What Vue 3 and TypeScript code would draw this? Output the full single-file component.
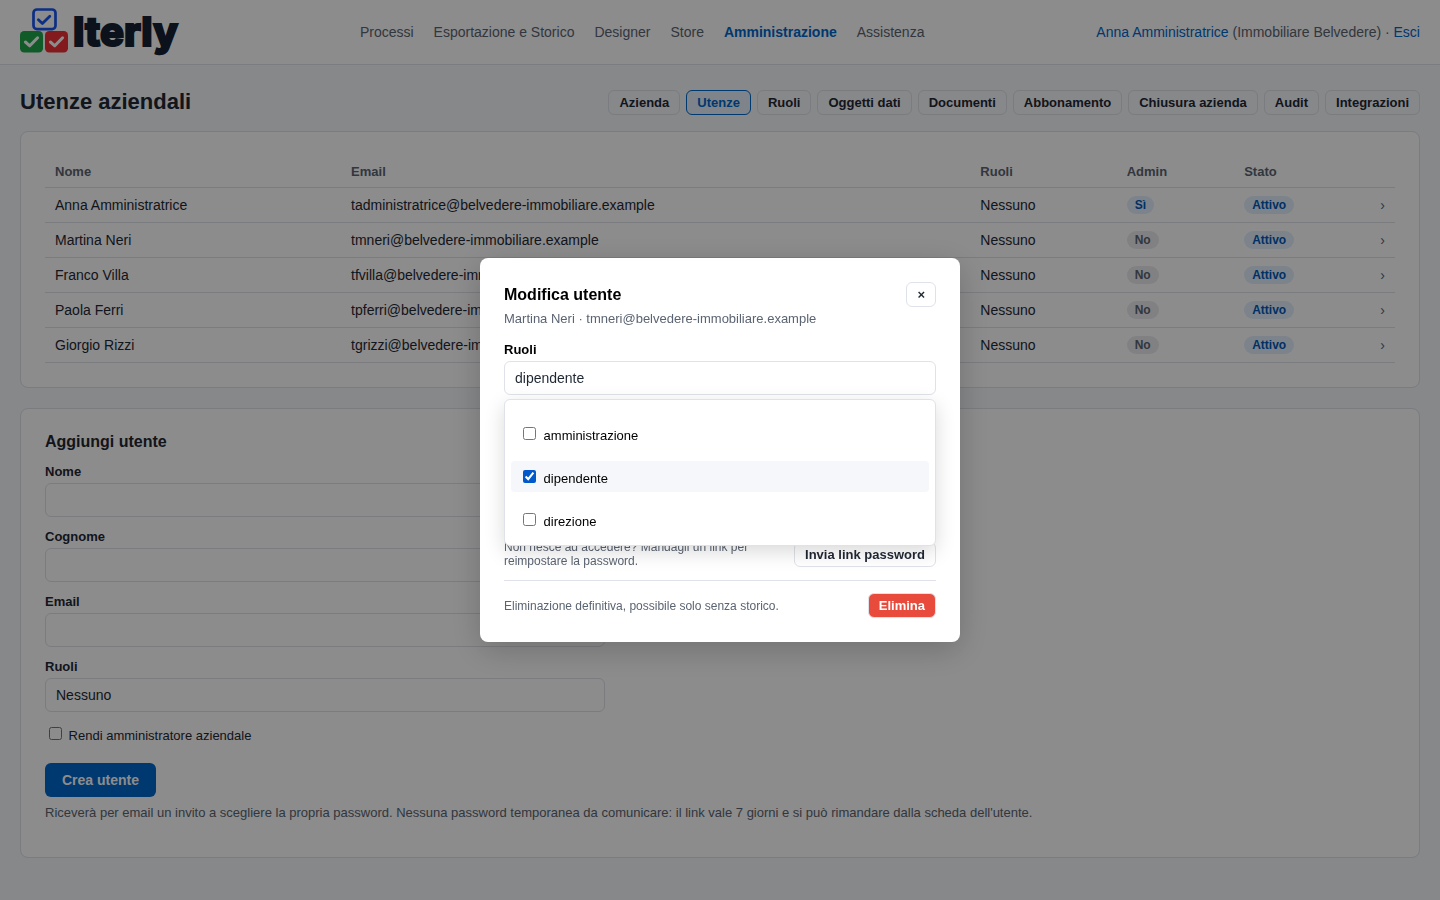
<script setup lang="ts">
import { ref } from 'vue'

interface User {
  name: string
  email: string
  admin: boolean
}

const navItems: string[] = ['Processi', 'Esportazione e Storico', 'Designer', 'Store', 'Amministrazione', 'Assistenza']
const tabs: string[] = ['Azienda', 'Utenze', 'Ruoli', 'Oggetti dati', 'Documenti', 'Abbonamento', 'Chiusura azienda', 'Audit', 'Integrazioni']
const users: User[] = [
  { name: 'Anna Amministratrice', email: 'tadministratrice@belvedere-immobiliare.example', admin: true },
  { name: 'Martina Neri', email: 'tmneri@belvedere-immobiliare.example', admin: false },
  { name: 'Franco Villa', email: 'tfvilla@belvedere-immobiliare.example', admin: false },
  { name: 'Paola Ferri', email: 'tpferri@belvedere-immobiliare.example', admin: false },
  { name: 'Giorgio Rizzi', email: 'tgrizzi@belvedere-immobiliare.example', admin: false },
]
const roles: string[] = ['amministrazione', 'dipendente', 'direzione']
const selected = ref<string[]>(['dipendente'])
const makeAdmin = ref(false)
</script>

<template>
  <div class="page">
    <header class="topbar">
      <a class="logo" href="#" aria-label="Iterly">
        <svg width="160" height="48" viewBox="0 0 160 48" aria-hidden="true">
          <rect x="13.5" y="1.5" width="22" height="19.6" rx="3.4" fill="none" stroke="#1656f0" stroke-width="2.7" />
          <path d="M18.4 11.8l4 3.8 7.4-7.4" fill="none" stroke="#1656f0" stroke-width="2.8" stroke-linecap="round" stroke-linejoin="round" />
          <rect x="0" y="23" width="23" height="21.6" rx="4.2" fill="#1fa64a" />
          <path d="M5.4 34l4.4 3.8 7.8-8" fill="none" stroke="#fff" stroke-width="3" stroke-linecap="round" stroke-linejoin="round" />
          <rect x="25" y="23" width="23" height="21.6" rx="4.2" fill="#ee3035" />
          <path d="M30.4 34l4.4 3.8 7.8-8" fill="none" stroke="#fff" stroke-width="3" stroke-linecap="round" stroke-linejoin="round" />
          <text class="wordmark" x="53" y="38">Iterly</text>
        </svg>
      </a>
      <nav class="nav">
        <a v-for="item in navItems" :key="item" href="#" :class="{ active: item === 'Amministrazione' }">{{ item }}</a>
      </nav>
      <div class="account"><a href="#">Anna Amministratrice</a> (Immobiliare Belvedere) · <a href="#">Esci</a></div>
    </header>

    <main class="main">
      <div class="heading">
        <h1>Utenze aziendali</h1>
        <nav class="tabs">
          <a v-for="tab in tabs" :key="tab" href="#" class="small-btn" :class="{ current: tab === 'Utenze' }">{{ tab }}</a>
        </nav>
      </div>

      <section class="card">
        <table>
          <thead>
            <tr>
              <th>Nome</th>
              <th>Email</th>
              <th>Ruoli</th>
              <th>Admin</th>
              <th>Stato</th>
              <th class="arrow"></th>
            </tr>
          </thead>
          <tbody>
            <tr v-for="user in users" :key="user.email">
              <td>{{ user.name }}</td>
              <td>{{ user.email }}</td>
              <td>Nessuno</td>
              <td><span class="badge" :class="{ muted: !user.admin }">{{ user.admin ? 'Sì' : 'No' }}</span></td>
              <td><span class="badge">Attivo</span></td>
              <td class="arrow">›</td>
            </tr>
          </tbody>
        </table>
      </section>

      <section class="card">
        <h2>Aggiungi utente</h2>
        <form class="form" @submit.prevent>
          <label class="label" for="nome">Nome</label>
          <input id="nome" class="control" type="text" />
          <label class="label" for="cognome">Cognome</label>
          <input id="cognome" class="control" type="text" />
          <label class="label" for="email">Email</label>
          <input id="email" class="control" type="email" />
          <label class="label" for="ruoli">Ruoli</label>
          <button id="ruoli" class="control picker" type="button">Nessuno</button>
          <label class="check"><input v-model="makeAdmin" type="checkbox" /> Rendi amministratore aziendale</label>
          <button class="primary" type="submit">Crea utente</button>
        </form>
        <p class="hint">Riceverà per email un invito a scegliere la propria password. Nessuna password temporanea da comunicare: il link vale 7 giorni e si può rimandare dalla scheda dell'utente.</p>
      </section>
    </main>

    <div class="backdrop">
      <dialog class="modal" open aria-labelledby="modal-title">
        <div class="modal-head">
          <h3 id="modal-title">Modifica utente</h3>
          <button class="small-btn" type="button" aria-label="Chiudi">×</button>
        </div>
        <p class="subtitle">Martina Neri · tmneri@belvedere-immobiliare.example</p>
        <label class="label" for="ruoli-utente">Ruoli</label>
        <div class="select">
          <button id="ruoli-utente" class="control picker" type="button" aria-expanded="true">{{ selected.join(', ') || 'Nessuno' }}</button>
          <div class="menu">
            <label v-for="role in roles" :key="role" class="check option" :class="{ hover: role === 'dipendente' }">
              <input v-model="selected" type="checkbox" :value="role" /> {{ role }}
            </label>
          </div>
        </div>
        <div class="actions">
          <div class="action">
            <p>Non riesce ad accedere? Mandagli un link per reimpostare la password.</p>
            <button class="small-btn" type="button">Invia link password</button>
          </div>
          <div class="action">
            <p>Eliminazione definitiva, possibile solo senza storico.</p>
            <button class="small-btn danger" type="button">Elimina</button>
          </div>
        </div>
      </dialog>
    </div>
  </div>
</template>

<style>
body {
  margin: 0;
  background: #f5f7fb;
}
</style>

<style scoped>
* {
  box-sizing: border-box;
}

.page {
  color: #1f2733;
  font-family: "Liberation Sans", Arial, sans-serif;
  font-size: 14px;
}

a {
  color: #0066cc;
  text-decoration: none;
}

h1,
h2,
h3,
p {
  margin: 0;
}

.topbar {
  display: flex;
  align-items: center;
  justify-content: space-between;
  padding: 8px 20px;
  border-bottom: 1px solid #dfe2e8;
  background: #fff;
}

.logo,
.logo svg {
  display: block;
  overflow: visible;
}

.wordmark {
  fill: #172133;
  stroke: #172133;
  stroke-width: 2px;
  font-family: Inter, sans-serif;
  font-size: 40px;
  font-weight: 800;
}

.nav {
  display: flex;
  gap: 20px;
  padding-left: 8px;
}

.nav a {
  color: #5b6472;
}

.nav .active {
  color: #0066cc;
  font-weight: 700;
}

.account {
  color: #5b6472;
}

.main {
  display: grid;
  gap: 20px;
  padding: 24px 20px;
}

.heading {
  display: flex;
  align-items: center;
  justify-content: space-between;
  margin-bottom: -4px;
}

h1 {
  font-size: 22px;
}

.tabs {
  display: flex;
  gap: 6px;
}

.small-btn {
  flex: none;
  padding: 4px 10px;
  border: 1px solid #dfe2e8;
  border-radius: 6px;
  background: #fff;
  color: #1f2733;
  font-family: inherit;
  font-size: 13px;
  font-weight: 700;
  line-height: 15px;
}

.tabs .small-btn {
  background: transparent;
}

.tabs .current {
  border-color: #0066cc;
  background: #e8f1fc;
  color: #0066cc;
}

.card {
  padding: 24px;
  border: 1px solid #dfe2e8;
  border-radius: 8px;
  background: #fff;
}

table {
  width: 100%;
  border-collapse: separate;
  border-spacing: 0;
}

th,
td {
  padding: 8px 10px;
  border-bottom: 1px solid #dfe2e8;
  text-align: left;
}

th {
  color: #5b6472;
  font-size: 13px;
  line-height: 15px;
}

td {
  line-height: 18px;
}

.arrow {
  width: 1px;
  color: #5b6472;
}

.badge {
  display: inline-block;
  padding: 2px 8px;
  border-radius: 9px;
  background: #e3effd;
  color: #0058b8;
  font-size: 12px;
  font-weight: 700;
  line-height: 14px;
  vertical-align: top;
}

.badge.muted {
  background: #ececee;
  color: #5b6472;
}

h2,
h3 {
  font-size: 16px;
  line-height: 18px;
}

h2 {
  margin-bottom: 13px;
}

.form {
  max-width: 560px;
}

.label {
  display: block;
  margin: 12px 0 4px;
  font-size: 13px;
  font-weight: 700;
  line-height: 15px;
}

.control {
  display: block;
  width: 100%;
  height: 34px;
  padding: 8px 10px;
  border: 1px solid #dfe2e8;
  border-radius: 6px;
  background: #fff;
  color: #1f2733;
  font-family: inherit;
  font-size: 14px;
}

.picker {
  line-height: 16px;
  text-align: left;
}

.check {
  display: block;
  margin: 12px 0 4px;
  font-size: 13px;
}

.check input {
  margin: 3px 3px 3px 4px;
  accent-color: #0058cc;
}

.primary {
  height: 34px;
  margin-top: 16px;
  padding: 0 17px;
  border: 0;
  border-radius: 6px;
  background: #0066cc;
  color: #fff;
  font-family: inherit;
  font-size: 14px;
  font-weight: 700;
}

.hint {
  margin: 8px 0 13px;
  color: #5b6472;
  font-size: 13px;
  line-height: 15px;
}

.backdrop {
  position: fixed;
  inset: 0;
  display: flex;
  align-items: center;
  justify-content: center;
  background: rgba(0, 0, 0, 0.45);
}

.modal {
  position: static;
  width: 480px;
  max-width: 100%;
  margin: 0;
  padding: 24px;
  border: 0;
  border-radius: 8px;
  background: #fff;
  box-shadow: 0 8px 32px rgba(0, 0, 0, 0.2);
  color: #000;
}

.modal-head {
  display: flex;
  align-items: center;
  justify-content: space-between;
}

.subtitle {
  margin: 4px 0 16px;
  color: #5b6472;
  font-size: 13px;
  line-height: 15px;
}

.select {
  position: relative;
}

.menu {
  position: absolute;
  top: 100%;
  right: 0;
  left: 0;
  margin-top: 4px;
  padding: 6px;
  border: 1px solid #dfe2e8;
  border-radius: 6px;
  background: #fff;
  box-shadow: 0 6px 20px rgba(0, 0, 0, 0.15);
}

.menu::before,
.menu::after {
  display: table;
  content: "";
}

.option {
  padding: 6px 8px;
  border-radius: 4px;
}

.option input {
  margin-right: 4px;
}

.option.hover {
  background: #f5f7fb;
}

.actions {
  margin-top: 132px;
}

.action {
  display: flex;
  align-items: center;
  justify-content: space-between;
  gap: 12px;
  padding-top: 12px;
  border-top: 1px solid #dfe2e8;
}

.action + .action {
  margin-top: 12px;
}

.action p {
  color: #5b6472;
  font-size: 12px;
  line-height: 14px;
}

.danger {
  background: #e84a3c;
  color: #fff;
}
</style>
